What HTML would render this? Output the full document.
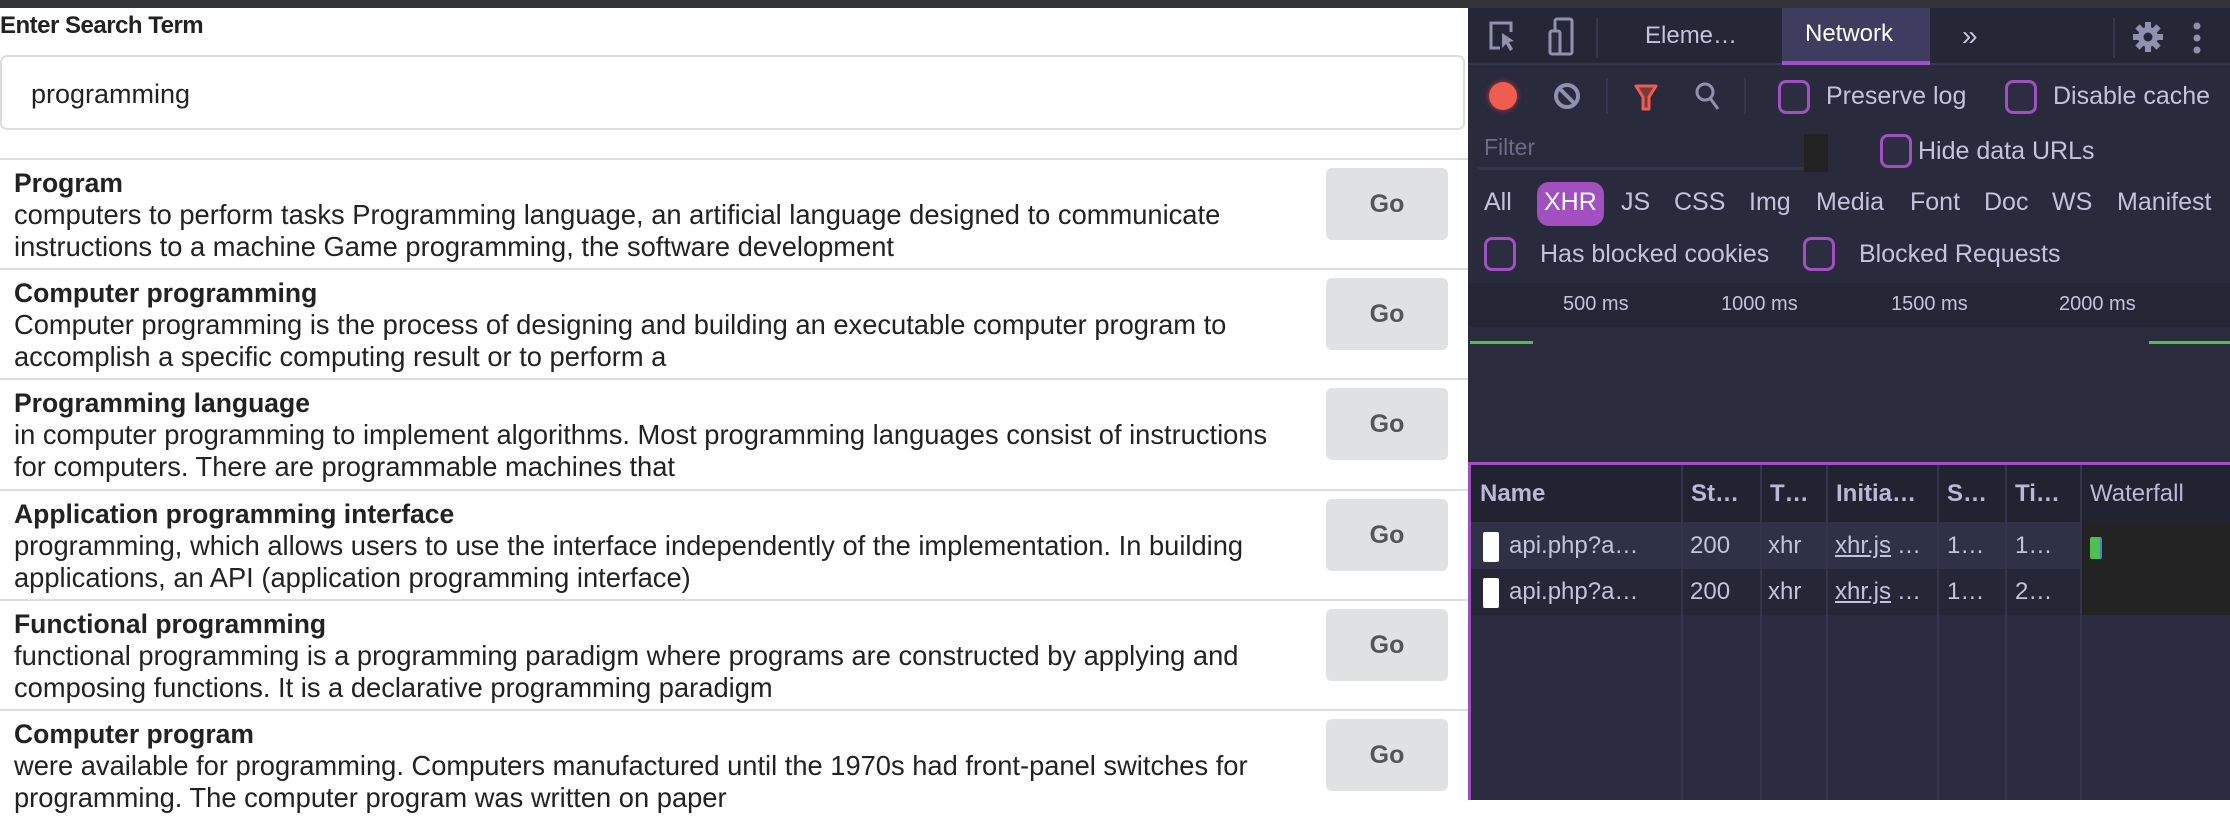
<!DOCTYPE html>
<html><head><style>
*{margin:0;padding:0;box-sizing:border-box}
body{width:2230px;height:800px;overflow:hidden;background:#fff;position:relative;font-family:"Liberation Sans",sans-serif}
.a{position:absolute;white-space:nowrap}
.topbar{left:0;top:0;width:2230px;height:8px;background:#323438}
.lbl{left:0;top:12px;font-size:24px;font-weight:bold;color:#222;letter-spacing:-0.5px}
.inp{left:0;top:55px;width:1465px;height:75px;border:2px solid #ddd;border-radius:7px}
.inp span{position:absolute;left:29px;top:22px;font-size:27px;color:#222}
.row{left:0;width:1468px;height:110px;border-top:2px solid #ddd}
.row .t{position:absolute;left:14px;top:8px;font-size:26.5px;font-weight:bold;color:#222}
.row .d{position:absolute;left:14px;top:39px;font-size:27.3px;color:#222;line-height:32px}
.go{position:absolute;left:1326px;top:8px;width:122px;height:72px;background:#e0e1e2;border-radius:6px;font-size:25px;font-weight:bold;color:#555;text-align:center;line-height:72px}
.dt{left:1468px;top:8px;width:762px;height:792px;background:#292a3c;color:#c2c3dd;font-size:24px}
.dt .a{font-size:24px}
.cb{position:absolute;width:32px;height:34px;border:3px solid #a050c0;border-radius:8px;background:#2c2d40}
.hdr{color:#b8b9d6}
.ty{top:180px;font-size:25px!important}
</style></head><body>
<div class="a topbar"></div>
<div class="a lbl">Enter Search Term</div>
<div class="a inp"><span>programming</span></div>

<div class="a row" style="top:158px"><div class="t">Program</div><div class="d">computers to perform tasks Programming language, an artificial language designed to communicate<br>instructions to a machine Game programming, the software development</div><div class="go">Go</div></div>
<div class="a row" style="top:268px"><div class="t">Computer programming</div><div class="d">Computer programming is the process of designing and building an executable computer program to<br>accomplish a specific computing result or to perform a</div><div class="go">Go</div></div>
<div class="a row" style="top:378px"><div class="t">Programming language</div><div class="d">in computer programming to implement algorithms. Most programming languages consist of instructions<br>for computers. There are programmable machines that</div><div class="go">Go</div></div>
<div class="a row" style="top:489px"><div class="t">Application programming interface</div><div class="d">programming, which allows users to use the interface independently of the implementation. In building<br>applications, an API (application programming interface)</div><div class="go">Go</div></div>
<div class="a row" style="top:599px"><div class="t">Functional programming</div><div class="d">functional programming is a programming paradigm where programs are constructed by applying and<br>composing functions. It is a declarative programming paradigm</div><div class="go">Go</div></div>
<div class="a row" style="top:709px"><div class="t">Computer program</div><div class="d">were available for programming. Computers manufactured until the 1970s had front-panel switches for<br>programming. The computer program was written on paper</div><div class="go">Go</div></div>

<div class="a dt">
 <div class="a" style="left:0;top:0;width:762px;height:57px;background:#262736;border-bottom:2px solid #353650"></div>
 <svg class="a" style="left:20px;top:12px" width="30" height="34" viewBox="0 0 30 34"><path d="M12 28H3V3h20v9" fill="none" stroke="#8f91b0" stroke-width="3"/><path d="M14 13l12 8-5 1 4 7-3 2-4-7-4 4z" fill="#8f91b0"/></svg>
 <svg class="a" style="left:80px;top:9px" width="26" height="40" viewBox="0 0 26 40"><rect x="7" y="2" width="17" height="35" rx="2" fill="none" stroke="#8f91b0" stroke-width="3"/><rect x="2" y="14" width="10" height="23" rx="2" fill="#292a3c" stroke="#8f91b0" stroke-width="3"/></svg>
 <div class="a" style="left:128px;top:10px;width:2px;height:40px;background:#353650"></div>
 <div class="a" style="left:177px;top:14px;color:#c2c3dd">Eleme…</div>
 <div class="a" style="left:314px;top:0;width:148px;height:57px;background:#3f3d5f;border-bottom:4px solid #a050c8"></div>
 <div class="a" style="left:337px;top:12px;color:#fff">Network</div>
 <div class="a" style="left:494px;top:12px;color:#c2c3dd;font-size:28px">»</div>
 <div class="a" style="left:645px;top:10px;width:2px;height:40px;background:#353650"></div>
 <svg class="a" style="left:664px;top:13px" width="32" height="32" viewBox="0 0 32 32"><g fill="#8f91b0"><circle cx="16" cy="16" r="10"/><rect x="13" y="1" width="6" height="30"/><rect x="1" y="13" width="30" height="6"/><rect x="13" y="1" width="6" height="30" transform="rotate(45 16 16)"/><rect x="13" y="1" width="6" height="30" transform="rotate(-45 16 16)"/></g><circle cx="16" cy="16" r="4.5" fill="#262736"/></svg>
 <svg class="a" style="left:724px;top:14px" width="10" height="34"><circle cx="5" cy="4" r="3.5" fill="#8f91b0"/><circle cx="5" cy="16" r="3.5" fill="#8f91b0"/><circle cx="5" cy="28" r="3.5" fill="#8f91b0"/></svg>
 <div class="a" style="left:21px;top:74px;width:28px;height:28px;border-radius:50%;background:#ee5d50;box-shadow:0 0 6px #c04040"></div>
 <svg class="a" style="left:84px;top:73px" width="30" height="30"><circle cx="15" cy="15" r="11" fill="none" stroke="#8f91b0" stroke-width="4"/><path d="M7 7l16 16" stroke="#8f91b0" stroke-width="4"/></svg>
 <div class="a" style="left:138px;top:70px;width:2px;height:36px;background:#353650"></div>
 <svg class="a" style="left:166px;top:76px" width="24" height="28"><path d="M2 2h20l-7 11v12h-6V13z" fill="#7a3a3a" stroke="#ee5d50" stroke-width="3" stroke-linejoin="round"/></svg>
 <svg class="a" style="left:227px;top:74px" width="26" height="30"><circle cx="10" cy="10" r="8" fill="none" stroke="#8f91b0" stroke-width="3"/><path d="M15 16l8 11" stroke="#8f91b0" stroke-width="3"/></svg>
 <div class="a" style="left:276px;top:70px;width:2px;height:36px;background:#353650"></div>
 <div class="cb" style="left:310px;top:72px"></div>
 <div class="a" style="left:358px;top:74px;font-size:25px">Preserve log</div>
 <div class="cb" style="left:537px;top:72px"></div>
 <div class="a" style="left:585px;top:74px;font-size:25px">Disable cache</div>
 <div class="a" style="left:16px;top:126px;color:#6a6c88;font-size:23px">Filter</div>
 <div class="a" style="left:10px;top:159px;width:326px;height:3px;background:#34354c"></div>
 <div class="a" style="left:336px;top:126px;width:24px;height:38px;background:#222"></div>
 <div class="cb" style="left:412px;top:126px"></div>
 <div class="a" style="left:450px;top:129px;font-size:25px">Hide data URLs</div>
 <div class="a" style="left:69px;top:174px;width:67px;height:44px;background:#a24fc0;border-radius:12px"></div>
 <div class="a ty" style="left:16px">All</div>
 <div class="a ty" style="left:76px;color:#fff">XHR</div>
 <div class="a ty" style="left:153px">JS</div>
 <div class="a ty" style="left:206px">CSS</div>
 <div class="a ty" style="left:281px">Img</div>
 <div class="a ty" style="left:348px">Media</div>
 <div class="a ty" style="left:442px">Font</div>
 <div class="a ty" style="left:516px">Doc</div>
 <div class="a ty" style="left:584px">WS</div>
 <div class="a ty" style="left:649px">Manifest</div>
 <div class="cb" style="left:16px;top:229px"></div>
 <div class="a" style="left:72px;top:232px;font-size:25px">Has blocked cookies</div>
 <div class="cb" style="left:335px;top:229px"></div>
 <div class="a" style="left:391px;top:232px;font-size:25px">Blocked Requests</div>
 <div class="a" style="left:0;top:275px;width:762px;height:44px;background:#252636"></div>
 <div class="a" style="left:0;top:319px;width:762px;height:135px;background:#2a2c3e"></div>
 <div class="a" style="top:285px;left:95px;font-size:20px">500 ms</div>
 <div class="a" style="top:285px;left:253px;font-size:20px">1000 ms</div>
 <div class="a" style="top:285px;left:423px;font-size:20px">1500 ms</div>
 <div class="a" style="top:285px;left:591px;font-size:20px">2000 ms</div>
 <div class="a" style="left:2px;top:333px;width:63px;height:3px;background:#4fc050"></div>
 <div class="a" style="left:681px;top:333px;width:81px;height:3px;background:#4fc050"></div>
 <div class="a" style="left:0;top:454px;width:762px;height:3px;background:#9b4fc0"></div>
 <div class="a" style="left:0;top:454px;width:3px;height:338px;background:#9b4fc0"></div>
 <div class="a" style="left:3px;top:457px;width:759px;height:57px;background:#222331"></div>
 <div class="a" style="left:3px;top:514px;width:609px;height:47px;background:#2f3146"></div>
 <div class="a" style="left:3px;top:561px;width:609px;height:46px;background:#252636"></div>
 <div class="a" style="left:612px;top:514px;width:150px;height:93px;background:#232323"></div>
 <div class="a" style="left:3px;top:607px;width:759px;height:185px;background:#2a2b3e"></div>
 <div class="a" style="left:213px;top:457px;width:2px;height:335px;background:#34354c"></div>
 <div class="a" style="left:292px;top:457px;width:2px;height:335px;background:#34354c"></div>
 <div class="a" style="left:358px;top:457px;width:2px;height:335px;background:#34354c"></div>
 <div class="a" style="left:469px;top:457px;width:2px;height:335px;background:#34354c"></div>
 <div class="a" style="left:537px;top:457px;width:2px;height:335px;background:#34354c"></div>
 <div class="a" style="left:612px;top:457px;width:2px;height:335px;background:#34354c"></div>
 <div class="a hdr" style="left:12px;top:472px;font-weight:bold">Name</div>
 <div class="a hdr" style="left:223px;top:472px;font-weight:bold">St…</div>
 <div class="a hdr" style="left:302px;top:472px;font-weight:bold">T…</div>
 <div class="a hdr" style="left:368px;top:472px;font-weight:bold">Initia…</div>
 <div class="a hdr" style="left:479px;top:472px;font-weight:bold">S…</div>
 <div class="a hdr" style="left:547px;top:472px;font-weight:bold">Ti…</div>
 <div class="a hdr" style="left:622px;top:472px">Waterfall</div>
 <div class="a" style="left:15px;top:524px;width:16px;height:30px;background:#fff;border-radius:2px"></div>
 <div class="a" style="left:41px;top:524px">api.php?a…</div>
 <div class="a" style="left:222px;top:524px">200</div>
 <div class="a" style="left:300px;top:524px">xhr</div>
 <div class="a" style="left:367px;top:524px;text-decoration:underline">xhr.js</div><div class="a" style="left:429px;top:524px">…</div>
 <div class="a" style="left:479px;top:524px">1…</div>
 <div class="a" style="left:547px;top:524px">1…</div>
 <div class="a" style="left:15px;top:570px;width:16px;height:30px;background:#fff;border-radius:2px"></div>
 <div class="a" style="left:41px;top:570px">api.php?a…</div>
 <div class="a" style="left:222px;top:570px">200</div>
 <div class="a" style="left:300px;top:570px">xhr</div>
 <div class="a" style="left:367px;top:570px;text-decoration:underline">xhr.js</div><div class="a" style="left:429px;top:570px">…</div>
 <div class="a" style="left:479px;top:570px">1…</div>
 <div class="a" style="left:547px;top:570px">2…</div>
 <div class="a" style="left:622px;top:529px;width:12px;height:22px;background:#4fc050;border-right:2px solid #3a8ad0;border-radius:2px"></div>
</div>
</body></html>
